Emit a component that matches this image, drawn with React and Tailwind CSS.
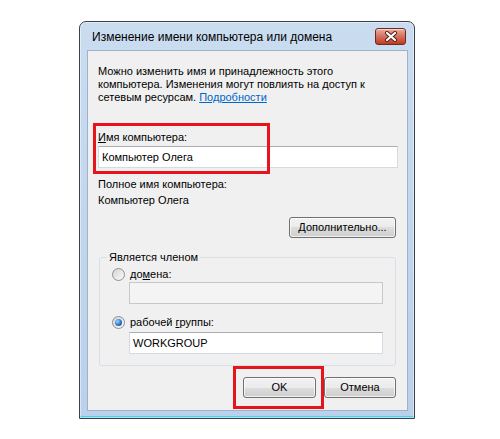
const font = "font-['Liberation_Sans',Arial,sans-serif]";

function CloseButton() {
  return (
    <div className="w-[31px] h-[17px] rounded-[3px] border border-[#6e2a20] bg-gradient-to-b from-[#e9ada0] via-[#d4705c] to-[#c0391f] flex items-center justify-center shadow-[inset_0_1px_0_rgba(255,255,255,0.5)]">
      <svg width="14" height="11" viewBox="0 0 14 11">
        <path d="M3 2 L11 9 M11 2 L3 9" stroke="#4a2018" strokeWidth="4" strokeLinecap="round" />
        <path d="M3 2 L11 9 M11 2 L3 9" stroke="#ffffff" strokeWidth="2.2" strokeLinecap="round" />
      </svg>
    </div>
  );
}

function Radio({ checked }) {
  return (
    <div className="w-[13px] h-[13px] rounded-full border border-[#8e8f8f] bg-gradient-to-br from-[#d4d4d4] to-[#fbfbfb] flex items-center justify-center">
      {checked && (
        <div className="w-[7px] h-[7px] rounded-full bg-[radial-gradient(circle_at_35%_35%,#9fd4ff,#1f6cc4_60%,#0d3f8a)]" />
      )}
    </div>
  );
}

function Button({ children, width }) {
  return (
    <button
      className={`${width} h-[21px] rounded-[3px] border border-[#707070] bg-[linear-gradient(to_bottom,#f2f2f2_0%,#ebebeb_50%,#dddddd_50%,#cfcfcf_100%)] text-[11px] text-black shadow-[inset_0_0_0_1px_rgba(255,255,255,0.7)]`}
    >
      {children}
    </button>
  );
}

function TextBox({ value, disabled, width }) {
  return (
    <div
      className={`${width} h-[22px] border ${
        disabled ? "border-[#c8c8c8] bg-[#f4f4f4]" : "border-[#d6dbe3] border-t-[#abadb3] bg-white"
      } flex items-center px-[3px] text-[11px] text-black`}
    >
      {value}
    </div>
  );
}

export default function App() {
  return (
    <div className={`w-[500px] h-[439px] bg-white pt-[21px] pl-[79px] ${font}`}>
      {/* Окно */}
      <div className="w-[336px] h-[398px] border border-[#3c4048] rounded-t-[7px] bg-gradient-to-b from-[#cadcf0] to-[#b9d1ea] flex flex-col shadow-[inset_0_0_0_1px_rgba(255,255,255,0.45),inset_0_-2px_0_#58cde9]">
        {/* Заголовок */}
        <div className="h-[28px] flex items-center justify-between pl-[12px] pr-[8px] pt-[1px]">
          <span className="text-[12px] text-black">Изменение имени компьютера или домена</span>
          <CloseButton />
        </div>

        {/* Клиентская область */}
        <div className="relative ml-[7px] mr-[6px] h-[361px] border border-[#9fb2c9] bg-[#f0f0f0] pl-[10px] pt-[14px] text-[11px] text-black">
          <p className="leading-[13px] w-[282px]">
            Можно изменить имя и принадлежность этого компьютера. Изменения могут повлиять на доступ к сетевым ресурсам.{" "}
            <span className="text-[#0066cc] underline">Подробности</span>
          </p>

          <div className="mt-[26px] leading-[15px]">
            <span className="underline">И</span>мя компьютера:
          </div>
          <div className="mt-[1px]">
            <TextBox value="Компьютер Олега" width="w-[300px]" />
          </div>

          <div className="mt-[9px] leading-[15px]">Полное имя компьютера:</div>
          <div className="mt-[1px] leading-[15px]">Компьютер Олега</div>

          <div className="mt-[9px] w-[298px] flex justify-end">
            <Button width="w-[107px]">
              <span className="underline">Д</span>ополнительно...
            </Button>
          </div>

          <fieldset className="mt-[12px] ml-[1px] w-[297px] border border-[#d5dfe5] rounded-[3px] pl-[12px] pb-[11px]">
            <legend className="ml-[-5px] px-[2px] leading-[15px]">Является членом</legend>
            <div className="mt-[1px] h-[16px] flex items-center gap-[5px]">
              <Radio />
              <span>
                до<span className="underline">м</span>ена:
              </span>
            </div>
            <div className="ml-[17px]">
              <TextBox disabled width="w-[254px]" />
            </div>
            <div className="mt-[10px] h-[16px] flex items-center gap-[5px]">
              <Radio checked />
              <span>
                рабочей <span className="underline">г</span>руппы:
              </span>
            </div>
            <div className="mt-[2px] ml-[17px]">
              <TextBox value="WORKGROUP" width="w-[254px]" />
            </div>
          </fieldset>

          <div className="mt-[11px] w-[298px] flex justify-end gap-[8px]">
            <Button width="w-[73px]">OK</Button>
            <Button width="w-[72px]">Отмена</Button>
          </div>

          {/* Красные рамки-выделения */}
          <div className="absolute left-[5px] top-[72px] w-[177px] h-[51px] border-[3px] border-[#e8141c]" />
          <div className="absolute left-[145px] top-[315px] w-[91px] h-[43px] border-[3px] border-[#e8141c]" />
        </div>
      </div>
    </div>
  );
}
